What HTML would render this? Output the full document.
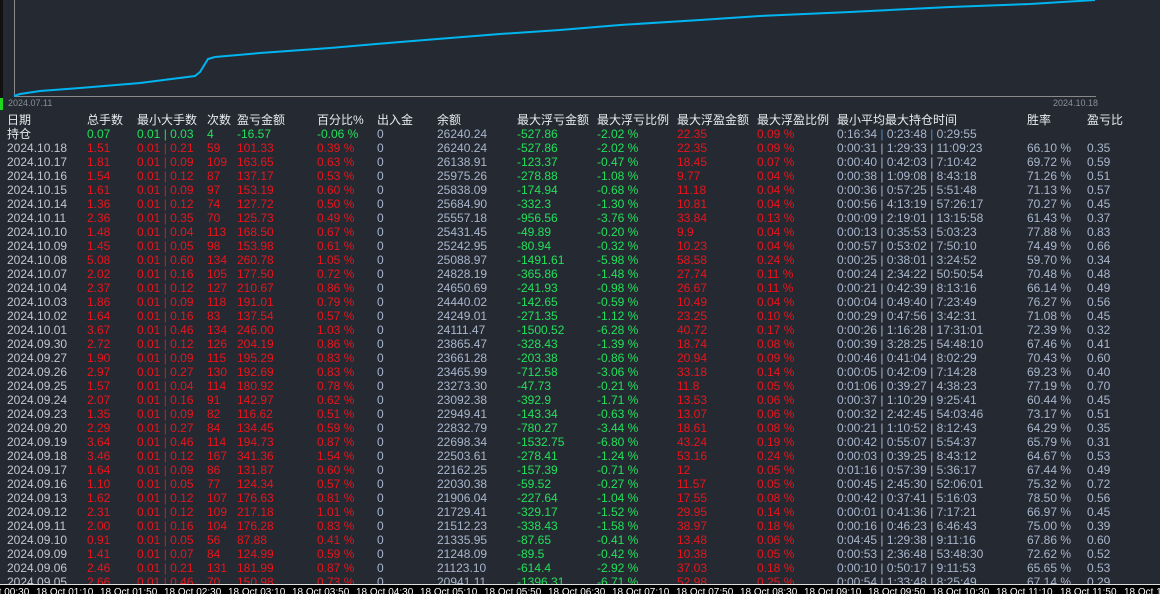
<!DOCTYPE html>
<html><head><meta charset="utf-8"><style>
*{margin:0;padding:0;box-sizing:border-box}
body{width:1160px;height:594px;background:#252a32;overflow:hidden;position:relative;font-family:"Liberation Sans","Noto Sans CJK SC",sans-serif;font-size:12px}
.row{position:absolute;left:0;height:14px;line-height:14px;white-space:nowrap;width:1160px}
.row span{position:absolute;top:0}
.h span{color:#e8eaee}
.d{color:#c2c6ce}.r{color:#e8141c}.g{color:#22e05a}.b{color:#a9b6cc}
.sep{color:#4a8ad8}
#bar{position:absolute;left:0;top:584px;width:1160px;height:10px;background:#000;border-top:1px solid #ddd;overflow:hidden}
#bar span{position:absolute;top:3px;color:#fff;font-size:10px;line-height:10px;white-space:nowrap}
</style></head><body>
<svg width="1160" height="110" style="position:absolute;left:0;top:0">
<rect x="0" y="0" width="3" height="594" fill="#111"/>
<rect x="0" y="98" width="3" height="12" fill="#1ed81e"/>
<line x1="14.5" y1="0" x2="14.5" y2="97" stroke="#8a8a8a" stroke-width="1"/>
<line x1="14" y1="96.5" x2="1096" y2="96.5" stroke="#8a8a8a" stroke-width="1"/>
<polyline fill="none" stroke="#00b4f0" stroke-width="2" points="14,96 20,94 40,91 80,88 140,83 195,76 200,72 208,59 215,57 260,53 330,48 400,42 500,34 560,30 620,25 700,20 760,16 850,12 950,7 1030,4 1095,0"/>
<text x="8" y="106" fill="#8a9098" font-size="9" font-family="Liberation Sans">2024.07.11</text>
<text x="1053" y="106" fill="#8a9098" font-size="9" font-family="Liberation Sans">2024.10.18</text>
</svg>
<div class="row h" style="top:113px"><span style="left:7px">日期</span><span style="left:87px">总手数</span><span style="left:137px">最小大手数</span><span style="left:207px">次数</span><span style="left:237px">盈亏金额</span><span style="left:317px">百分比%</span><span style="left:377px">出入金</span><span style="left:437px">余额</span><span style="left:517px">最大浮亏金额</span><span style="left:597px">最大浮亏比例</span><span style="left:677px">最大浮盈金额</span><span style="left:757px">最大浮盈比例</span><span style="left:837px">最小平均最大持仓时间</span><span style="left:1027px">胜率</span><span style="left:1087px">盈亏比</span></div>
<div class="row" style="top:127px"><span class="h" style="left:7px;color:#e8eaee">持仓</span><span class="g" style="left:87px">0.07</span><span class="g" style="left:137px">0.01 | 0.03</span><span class="g" style="left:207px">4</span><span class="g" style="left:237px">-16.57</span><span class="g" style="left:317px">-0.06 %</span><span class="b" style="left:377px">0</span><span class="b" style="left:437px">26240.24</span><span class="g" style="left:517px">-527.86</span><span class="g" style="left:597px">-2.02 %</span><span class="r" style="left:677px">22.35</span><span class="r" style="left:757px">0.09 %</span><span class="b" style="left:837px">0:16:34 <i class="sep" style="font-style:normal">|</i> 0:23:48 <i class="sep" style="font-style:normal">|</i> 0:29:55</span></div>
<div id="rows">
<div class="row" style="top:141px"><span class="d" style="left:7px">2024.10.18</span><span class="r" style="left:87px">1.51</span><span class="r" style="left:137px">0.01 | 0.21</span><span class="r" style="left:207px">59</span><span class="r" style="left:237px">101.33</span><span class="r" style="left:317px">0.39 %</span><span class="b" style="left:377px">0</span><span class="b" style="left:437px">26240.24</span><span class="g" style="left:517px">-527.86</span><span class="g" style="left:597px">-2.02 %</span><span class="r" style="left:677px">22.35</span><span class="r" style="left:757px">0.09 %</span><span class="b" style="left:837px">0:00:31 | 1:29:33 | 11:09:23</span><span class="b" style="left:1027px">66.10 %</span><span class="b" style="left:1087px">0.35</span></div>
<div class="row" style="top:155px"><span class="d" style="left:7px">2024.10.17</span><span class="r" style="left:87px">1.81</span><span class="r" style="left:137px">0.01 | 0.09</span><span class="r" style="left:207px">109</span><span class="r" style="left:237px">163.65</span><span class="r" style="left:317px">0.63 %</span><span class="b" style="left:377px">0</span><span class="b" style="left:437px">26138.91</span><span class="g" style="left:517px">-123.37</span><span class="g" style="left:597px">-0.47 %</span><span class="r" style="left:677px">18.45</span><span class="r" style="left:757px">0.07 %</span><span class="b" style="left:837px">0:00:40 | 0:42:03 | 7:10:42</span><span class="b" style="left:1027px">69.72 %</span><span class="b" style="left:1087px">0.59</span></div>
<div class="row" style="top:169px"><span class="d" style="left:7px">2024.10.16</span><span class="r" style="left:87px">1.54</span><span class="r" style="left:137px">0.01 | 0.12</span><span class="r" style="left:207px">87</span><span class="r" style="left:237px">137.17</span><span class="r" style="left:317px">0.53 %</span><span class="b" style="left:377px">0</span><span class="b" style="left:437px">25975.26</span><span class="g" style="left:517px">-278.88</span><span class="g" style="left:597px">-1.08 %</span><span class="r" style="left:677px">9.77</span><span class="r" style="left:757px">0.04 %</span><span class="b" style="left:837px">0:00:38 | 1:09:08 | 8:43:18</span><span class="b" style="left:1027px">71.26 %</span><span class="b" style="left:1087px">0.51</span></div>
<div class="row" style="top:183px"><span class="d" style="left:7px">2024.10.15</span><span class="r" style="left:87px">1.61</span><span class="r" style="left:137px">0.01 | 0.09</span><span class="r" style="left:207px">97</span><span class="r" style="left:237px">153.19</span><span class="r" style="left:317px">0.60 %</span><span class="b" style="left:377px">0</span><span class="b" style="left:437px">25838.09</span><span class="g" style="left:517px">-174.94</span><span class="g" style="left:597px">-0.68 %</span><span class="r" style="left:677px">11.18</span><span class="r" style="left:757px">0.04 %</span><span class="b" style="left:837px">0:00:36 | 0:57:25 | 5:51:48</span><span class="b" style="left:1027px">71.13 %</span><span class="b" style="left:1087px">0.57</span></div>
<div class="row" style="top:197px"><span class="d" style="left:7px">2024.10.14</span><span class="r" style="left:87px">1.36</span><span class="r" style="left:137px">0.01 | 0.12</span><span class="r" style="left:207px">74</span><span class="r" style="left:237px">127.72</span><span class="r" style="left:317px">0.50 %</span><span class="b" style="left:377px">0</span><span class="b" style="left:437px">25684.90</span><span class="g" style="left:517px">-332.3</span><span class="g" style="left:597px">-1.30 %</span><span class="r" style="left:677px">10.81</span><span class="r" style="left:757px">0.04 %</span><span class="b" style="left:837px">0:00:56 | 4:13:19 | 57:26:17</span><span class="b" style="left:1027px">70.27 %</span><span class="b" style="left:1087px">0.45</span></div>
<div class="row" style="top:211px"><span class="d" style="left:7px">2024.10.11</span><span class="r" style="left:87px">2.36</span><span class="r" style="left:137px">0.01 | 0.35</span><span class="r" style="left:207px">70</span><span class="r" style="left:237px">125.73</span><span class="r" style="left:317px">0.49 %</span><span class="b" style="left:377px">0</span><span class="b" style="left:437px">25557.18</span><span class="g" style="left:517px">-956.56</span><span class="g" style="left:597px">-3.76 %</span><span class="r" style="left:677px">33.84</span><span class="r" style="left:757px">0.13 %</span><span class="b" style="left:837px">0:00:09 | 2:19:01 | 13:15:58</span><span class="b" style="left:1027px">61.43 %</span><span class="b" style="left:1087px">0.37</span></div>
<div class="row" style="top:225px"><span class="d" style="left:7px">2024.10.10</span><span class="r" style="left:87px">1.48</span><span class="r" style="left:137px">0.01 | 0.04</span><span class="r" style="left:207px">113</span><span class="r" style="left:237px">168.50</span><span class="r" style="left:317px">0.67 %</span><span class="b" style="left:377px">0</span><span class="b" style="left:437px">25431.45</span><span class="g" style="left:517px">-49.89</span><span class="g" style="left:597px">-0.20 %</span><span class="r" style="left:677px">9.9</span><span class="r" style="left:757px">0.04 %</span><span class="b" style="left:837px">0:00:13 | 0:35:53 | 5:03:23</span><span class="b" style="left:1027px">77.88 %</span><span class="b" style="left:1087px">0.83</span></div>
<div class="row" style="top:239px"><span class="d" style="left:7px">2024.10.09</span><span class="r" style="left:87px">1.45</span><span class="r" style="left:137px">0.01 | 0.05</span><span class="r" style="left:207px">98</span><span class="r" style="left:237px">153.98</span><span class="r" style="left:317px">0.61 %</span><span class="b" style="left:377px">0</span><span class="b" style="left:437px">25242.95</span><span class="g" style="left:517px">-80.94</span><span class="g" style="left:597px">-0.32 %</span><span class="r" style="left:677px">10.23</span><span class="r" style="left:757px">0.04 %</span><span class="b" style="left:837px">0:00:57 | 0:53:02 | 7:50:10</span><span class="b" style="left:1027px">74.49 %</span><span class="b" style="left:1087px">0.66</span></div>
<div class="row" style="top:253px"><span class="d" style="left:7px">2024.10.08</span><span class="r" style="left:87px">5.08</span><span class="r" style="left:137px">0.01 | 0.60</span><span class="r" style="left:207px">134</span><span class="r" style="left:237px">260.78</span><span class="r" style="left:317px">1.05 %</span><span class="b" style="left:377px">0</span><span class="b" style="left:437px">25088.97</span><span class="g" style="left:517px">-1491.61</span><span class="g" style="left:597px">-5.98 %</span><span class="r" style="left:677px">58.58</span><span class="r" style="left:757px">0.24 %</span><span class="b" style="left:837px">0:00:25 | 0:38:01 | 3:24:52</span><span class="b" style="left:1027px">59.70 %</span><span class="b" style="left:1087px">0.34</span></div>
<div class="row" style="top:267px"><span class="d" style="left:7px">2024.10.07</span><span class="r" style="left:87px">2.02</span><span class="r" style="left:137px">0.01 | 0.16</span><span class="r" style="left:207px">105</span><span class="r" style="left:237px">177.50</span><span class="r" style="left:317px">0.72 %</span><span class="b" style="left:377px">0</span><span class="b" style="left:437px">24828.19</span><span class="g" style="left:517px">-365.86</span><span class="g" style="left:597px">-1.48 %</span><span class="r" style="left:677px">27.74</span><span class="r" style="left:757px">0.11 %</span><span class="b" style="left:837px">0:00:24 | 2:34:22 | 50:50:54</span><span class="b" style="left:1027px">70.48 %</span><span class="b" style="left:1087px">0.48</span></div>
<div class="row" style="top:281px"><span class="d" style="left:7px">2024.10.04</span><span class="r" style="left:87px">2.37</span><span class="r" style="left:137px">0.01 | 0.12</span><span class="r" style="left:207px">127</span><span class="r" style="left:237px">210.67</span><span class="r" style="left:317px">0.86 %</span><span class="b" style="left:377px">0</span><span class="b" style="left:437px">24650.69</span><span class="g" style="left:517px">-241.93</span><span class="g" style="left:597px">-0.98 %</span><span class="r" style="left:677px">26.67</span><span class="r" style="left:757px">0.11 %</span><span class="b" style="left:837px">0:00:21 | 0:42:39 | 8:13:16</span><span class="b" style="left:1027px">66.14 %</span><span class="b" style="left:1087px">0.49</span></div>
<div class="row" style="top:295px"><span class="d" style="left:7px">2024.10.03</span><span class="r" style="left:87px">1.86</span><span class="r" style="left:137px">0.01 | 0.09</span><span class="r" style="left:207px">118</span><span class="r" style="left:237px">191.01</span><span class="r" style="left:317px">0.79 %</span><span class="b" style="left:377px">0</span><span class="b" style="left:437px">24440.02</span><span class="g" style="left:517px">-142.65</span><span class="g" style="left:597px">-0.59 %</span><span class="r" style="left:677px">10.49</span><span class="r" style="left:757px">0.04 %</span><span class="b" style="left:837px">0:00:04 | 0:49:40 | 7:23:49</span><span class="b" style="left:1027px">76.27 %</span><span class="b" style="left:1087px">0.56</span></div>
<div class="row" style="top:309px"><span class="d" style="left:7px">2024.10.02</span><span class="r" style="left:87px">1.64</span><span class="r" style="left:137px">0.01 | 0.16</span><span class="r" style="left:207px">83</span><span class="r" style="left:237px">137.54</span><span class="r" style="left:317px">0.57 %</span><span class="b" style="left:377px">0</span><span class="b" style="left:437px">24249.01</span><span class="g" style="left:517px">-271.35</span><span class="g" style="left:597px">-1.12 %</span><span class="r" style="left:677px">23.25</span><span class="r" style="left:757px">0.10 %</span><span class="b" style="left:837px">0:00:29 | 0:47:56 | 3:42:31</span><span class="b" style="left:1027px">71.08 %</span><span class="b" style="left:1087px">0.45</span></div>
<div class="row" style="top:323px"><span class="d" style="left:7px">2024.10.01</span><span class="r" style="left:87px">3.67</span><span class="r" style="left:137px">0.01 | 0.46</span><span class="r" style="left:207px">134</span><span class="r" style="left:237px">246.00</span><span class="r" style="left:317px">1.03 %</span><span class="b" style="left:377px">0</span><span class="b" style="left:437px">24111.47</span><span class="g" style="left:517px">-1500.52</span><span class="g" style="left:597px">-6.28 %</span><span class="r" style="left:677px">40.72</span><span class="r" style="left:757px">0.17 %</span><span class="b" style="left:837px">0:00:26 | 1:16:28 | 17:31:01</span><span class="b" style="left:1027px">72.39 %</span><span class="b" style="left:1087px">0.32</span></div>
<div class="row" style="top:337px"><span class="d" style="left:7px">2024.09.30</span><span class="r" style="left:87px">2.72</span><span class="r" style="left:137px">0.01 | 0.12</span><span class="r" style="left:207px">126</span><span class="r" style="left:237px">204.19</span><span class="r" style="left:317px">0.86 %</span><span class="b" style="left:377px">0</span><span class="b" style="left:437px">23865.47</span><span class="g" style="left:517px">-328.43</span><span class="g" style="left:597px">-1.39 %</span><span class="r" style="left:677px">18.74</span><span class="r" style="left:757px">0.08 %</span><span class="b" style="left:837px">0:00:39 | 3:28:25 | 54:48:10</span><span class="b" style="left:1027px">67.46 %</span><span class="b" style="left:1087px">0.41</span></div>
<div class="row" style="top:351px"><span class="d" style="left:7px">2024.09.27</span><span class="r" style="left:87px">1.90</span><span class="r" style="left:137px">0.01 | 0.09</span><span class="r" style="left:207px">115</span><span class="r" style="left:237px">195.29</span><span class="r" style="left:317px">0.83 %</span><span class="b" style="left:377px">0</span><span class="b" style="left:437px">23661.28</span><span class="g" style="left:517px">-203.38</span><span class="g" style="left:597px">-0.86 %</span><span class="r" style="left:677px">20.94</span><span class="r" style="left:757px">0.09 %</span><span class="b" style="left:837px">0:00:46 | 0:41:04 | 8:02:29</span><span class="b" style="left:1027px">70.43 %</span><span class="b" style="left:1087px">0.60</span></div>
<div class="row" style="top:365px"><span class="d" style="left:7px">2024.09.26</span><span class="r" style="left:87px">2.97</span><span class="r" style="left:137px">0.01 | 0.27</span><span class="r" style="left:207px">130</span><span class="r" style="left:237px">192.69</span><span class="r" style="left:317px">0.83 %</span><span class="b" style="left:377px">0</span><span class="b" style="left:437px">23465.99</span><span class="g" style="left:517px">-712.58</span><span class="g" style="left:597px">-3.06 %</span><span class="r" style="left:677px">33.18</span><span class="r" style="left:757px">0.14 %</span><span class="b" style="left:837px">0:00:05 | 0:42:09 | 7:14:28</span><span class="b" style="left:1027px">69.23 %</span><span class="b" style="left:1087px">0.40</span></div>
<div class="row" style="top:379px"><span class="d" style="left:7px">2024.09.25</span><span class="r" style="left:87px">1.57</span><span class="r" style="left:137px">0.01 | 0.04</span><span class="r" style="left:207px">114</span><span class="r" style="left:237px">180.92</span><span class="r" style="left:317px">0.78 %</span><span class="b" style="left:377px">0</span><span class="b" style="left:437px">23273.30</span><span class="g" style="left:517px">-47.73</span><span class="g" style="left:597px">-0.21 %</span><span class="r" style="left:677px">11.8</span><span class="r" style="left:757px">0.05 %</span><span class="b" style="left:837px">0:01:06 | 0:39:27 | 4:38:23</span><span class="b" style="left:1027px">77.19 %</span><span class="b" style="left:1087px">0.70</span></div>
<div class="row" style="top:393px"><span class="d" style="left:7px">2024.09.24</span><span class="r" style="left:87px">2.07</span><span class="r" style="left:137px">0.01 | 0.16</span><span class="r" style="left:207px">91</span><span class="r" style="left:237px">142.97</span><span class="r" style="left:317px">0.62 %</span><span class="b" style="left:377px">0</span><span class="b" style="left:437px">23092.38</span><span class="g" style="left:517px">-392.9</span><span class="g" style="left:597px">-1.71 %</span><span class="r" style="left:677px">13.53</span><span class="r" style="left:757px">0.06 %</span><span class="b" style="left:837px">0:00:37 | 1:10:29 | 9:25:41</span><span class="b" style="left:1027px">60.44 %</span><span class="b" style="left:1087px">0.45</span></div>
<div class="row" style="top:407px"><span class="d" style="left:7px">2024.09.23</span><span class="r" style="left:87px">1.35</span><span class="r" style="left:137px">0.01 | 0.09</span><span class="r" style="left:207px">82</span><span class="r" style="left:237px">116.62</span><span class="r" style="left:317px">0.51 %</span><span class="b" style="left:377px">0</span><span class="b" style="left:437px">22949.41</span><span class="g" style="left:517px">-143.34</span><span class="g" style="left:597px">-0.63 %</span><span class="r" style="left:677px">13.07</span><span class="r" style="left:757px">0.06 %</span><span class="b" style="left:837px">0:00:32 | 2:42:45 | 54:03:46</span><span class="b" style="left:1027px">73.17 %</span><span class="b" style="left:1087px">0.51</span></div>
<div class="row" style="top:421px"><span class="d" style="left:7px">2024.09.20</span><span class="r" style="left:87px">2.29</span><span class="r" style="left:137px">0.01 | 0.27</span><span class="r" style="left:207px">84</span><span class="r" style="left:237px">134.45</span><span class="r" style="left:317px">0.59 %</span><span class="b" style="left:377px">0</span><span class="b" style="left:437px">22832.79</span><span class="g" style="left:517px">-780.27</span><span class="g" style="left:597px">-3.44 %</span><span class="r" style="left:677px">18.61</span><span class="r" style="left:757px">0.08 %</span><span class="b" style="left:837px">0:00:21 | 1:10:52 | 8:12:43</span><span class="b" style="left:1027px">64.29 %</span><span class="b" style="left:1087px">0.35</span></div>
<div class="row" style="top:435px"><span class="d" style="left:7px">2024.09.19</span><span class="r" style="left:87px">3.64</span><span class="r" style="left:137px">0.01 | 0.46</span><span class="r" style="left:207px">114</span><span class="r" style="left:237px">194.73</span><span class="r" style="left:317px">0.87 %</span><span class="b" style="left:377px">0</span><span class="b" style="left:437px">22698.34</span><span class="g" style="left:517px">-1532.75</span><span class="g" style="left:597px">-6.80 %</span><span class="r" style="left:677px">43.24</span><span class="r" style="left:757px">0.19 %</span><span class="b" style="left:837px">0:00:42 | 0:55:07 | 5:54:37</span><span class="b" style="left:1027px">65.79 %</span><span class="b" style="left:1087px">0.31</span></div>
<div class="row" style="top:449px"><span class="d" style="left:7px">2024.09.18</span><span class="r" style="left:87px">3.46</span><span class="r" style="left:137px">0.01 | 0.12</span><span class="r" style="left:207px">167</span><span class="r" style="left:237px">341.36</span><span class="r" style="left:317px">1.54 %</span><span class="b" style="left:377px">0</span><span class="b" style="left:437px">22503.61</span><span class="g" style="left:517px">-278.41</span><span class="g" style="left:597px">-1.24 %</span><span class="r" style="left:677px">53.16</span><span class="r" style="left:757px">0.24 %</span><span class="b" style="left:837px">0:00:03 | 0:39:25 | 8:43:12</span><span class="b" style="left:1027px">64.67 %</span><span class="b" style="left:1087px">0.53</span></div>
<div class="row" style="top:463px"><span class="d" style="left:7px">2024.09.17</span><span class="r" style="left:87px">1.64</span><span class="r" style="left:137px">0.01 | 0.09</span><span class="r" style="left:207px">86</span><span class="r" style="left:237px">131.87</span><span class="r" style="left:317px">0.60 %</span><span class="b" style="left:377px">0</span><span class="b" style="left:437px">22162.25</span><span class="g" style="left:517px">-157.39</span><span class="g" style="left:597px">-0.71 %</span><span class="r" style="left:677px">12</span><span class="r" style="left:757px">0.05 %</span><span class="b" style="left:837px">0:01:16 | 0:57:39 | 5:36:17</span><span class="b" style="left:1027px">67.44 %</span><span class="b" style="left:1087px">0.49</span></div>
<div class="row" style="top:477px"><span class="d" style="left:7px">2024.09.16</span><span class="r" style="left:87px">1.10</span><span class="r" style="left:137px">0.01 | 0.05</span><span class="r" style="left:207px">77</span><span class="r" style="left:237px">124.34</span><span class="r" style="left:317px">0.57 %</span><span class="b" style="left:377px">0</span><span class="b" style="left:437px">22030.38</span><span class="g" style="left:517px">-59.52</span><span class="g" style="left:597px">-0.27 %</span><span class="r" style="left:677px">11.57</span><span class="r" style="left:757px">0.05 %</span><span class="b" style="left:837px">0:00:45 | 2:45:30 | 52:06:01</span><span class="b" style="left:1027px">75.32 %</span><span class="b" style="left:1087px">0.72</span></div>
<div class="row" style="top:491px"><span class="d" style="left:7px">2024.09.13</span><span class="r" style="left:87px">1.62</span><span class="r" style="left:137px">0.01 | 0.12</span><span class="r" style="left:207px">107</span><span class="r" style="left:237px">176.63</span><span class="r" style="left:317px">0.81 %</span><span class="b" style="left:377px">0</span><span class="b" style="left:437px">21906.04</span><span class="g" style="left:517px">-227.64</span><span class="g" style="left:597px">-1.04 %</span><span class="r" style="left:677px">17.55</span><span class="r" style="left:757px">0.08 %</span><span class="b" style="left:837px">0:00:42 | 0:37:41 | 5:16:03</span><span class="b" style="left:1027px">78.50 %</span><span class="b" style="left:1087px">0.56</span></div>
<div class="row" style="top:505px"><span class="d" style="left:7px">2024.09.12</span><span class="r" style="left:87px">2.31</span><span class="r" style="left:137px">0.01 | 0.12</span><span class="r" style="left:207px">109</span><span class="r" style="left:237px">217.18</span><span class="r" style="left:317px">1.01 %</span><span class="b" style="left:377px">0</span><span class="b" style="left:437px">21729.41</span><span class="g" style="left:517px">-329.17</span><span class="g" style="left:597px">-1.52 %</span><span class="r" style="left:677px">29.95</span><span class="r" style="left:757px">0.14 %</span><span class="b" style="left:837px">0:00:01 | 0:41:36 | 7:17:21</span><span class="b" style="left:1027px">66.97 %</span><span class="b" style="left:1087px">0.45</span></div>
<div class="row" style="top:519px"><span class="d" style="left:7px">2024.09.11</span><span class="r" style="left:87px">2.00</span><span class="r" style="left:137px">0.01 | 0.16</span><span class="r" style="left:207px">104</span><span class="r" style="left:237px">176.28</span><span class="r" style="left:317px">0.83 %</span><span class="b" style="left:377px">0</span><span class="b" style="left:437px">21512.23</span><span class="g" style="left:517px">-338.43</span><span class="g" style="left:597px">-1.58 %</span><span class="r" style="left:677px">38.97</span><span class="r" style="left:757px">0.18 %</span><span class="b" style="left:837px">0:00:16 | 0:46:23 | 6:46:43</span><span class="b" style="left:1027px">75.00 %</span><span class="b" style="left:1087px">0.39</span></div>
<div class="row" style="top:533px"><span class="d" style="left:7px">2024.09.10</span><span class="r" style="left:87px">0.91</span><span class="r" style="left:137px">0.01 | 0.05</span><span class="r" style="left:207px">56</span><span class="r" style="left:237px">87.88</span><span class="r" style="left:317px">0.41 %</span><span class="b" style="left:377px">0</span><span class="b" style="left:437px">21335.95</span><span class="g" style="left:517px">-87.65</span><span class="g" style="left:597px">-0.41 %</span><span class="r" style="left:677px">13.48</span><span class="r" style="left:757px">0.06 %</span><span class="b" style="left:837px">0:04:45 | 1:29:38 | 9:11:16</span><span class="b" style="left:1027px">67.86 %</span><span class="b" style="left:1087px">0.60</span></div>
<div class="row" style="top:547px"><span class="d" style="left:7px">2024.09.09</span><span class="r" style="left:87px">1.41</span><span class="r" style="left:137px">0.01 | 0.07</span><span class="r" style="left:207px">84</span><span class="r" style="left:237px">124.99</span><span class="r" style="left:317px">0.59 %</span><span class="b" style="left:377px">0</span><span class="b" style="left:437px">21248.09</span><span class="g" style="left:517px">-89.5</span><span class="g" style="left:597px">-0.42 %</span><span class="r" style="left:677px">10.38</span><span class="r" style="left:757px">0.05 %</span><span class="b" style="left:837px">0:00:53 | 2:36:48 | 53:48:30</span><span class="b" style="left:1027px">72.62 %</span><span class="b" style="left:1087px">0.52</span></div>
<div class="row" style="top:561px"><span class="d" style="left:7px">2024.09.06</span><span class="r" style="left:87px">2.46</span><span class="r" style="left:137px">0.01 | 0.21</span><span class="r" style="left:207px">131</span><span class="r" style="left:237px">181.99</span><span class="r" style="left:317px">0.87 %</span><span class="b" style="left:377px">0</span><span class="b" style="left:437px">21123.10</span><span class="g" style="left:517px">-614.4</span><span class="g" style="left:597px">-2.92 %</span><span class="r" style="left:677px">37.03</span><span class="r" style="left:757px">0.18 %</span><span class="b" style="left:837px">0:00:10 | 0:50:17 | 9:11:53</span><span class="b" style="left:1027px">65.65 %</span><span class="b" style="left:1087px">0.53</span></div>
<div class="row" style="top:575px"><span class="d" style="left:7px">2024.09.05</span><span class="r" style="left:87px">2.66</span><span class="r" style="left:137px">0.01 | 0.46</span><span class="r" style="left:207px">70</span><span class="r" style="left:237px">150.98</span><span class="r" style="left:317px">0.73 %</span><span class="b" style="left:377px">0</span><span class="b" style="left:437px">20941.11</span><span class="g" style="left:517px">-1396.31</span><span class="g" style="left:597px">-6.71 %</span><span class="r" style="left:677px">52.98</span><span class="r" style="left:757px">0.25 %</span><span class="b" style="left:837px">0:00:54 | 1:33:48 | 8:25:49</span><span class="b" style="left:1027px">67.14 %</span><span class="b" style="left:1087px">0.29</span></div>
</div>
<div id="bar">
<span style="left:-28px">18 Oct 00:30</span><span style="left:36px">18 Oct 01:10</span><span style="left:100px">18 Oct 01:50</span><span style="left:164px">18 Oct 02:30</span><span style="left:228px">18 Oct 03:10</span><span style="left:292px">18 Oct 03:50</span><span style="left:356px">18 Oct 04:30</span><span style="left:420px">18 Oct 05:10</span><span style="left:484px">18 Oct 05:50</span><span style="left:548px">18 Oct 06:30</span><span style="left:612px">18 Oct 07:10</span><span style="left:676px">18 Oct 07:50</span><span style="left:740px">18 Oct 08:30</span><span style="left:804px">18 Oct 09:10</span><span style="left:868px">18 Oct 09:50</span><span style="left:932px">18 Oct 10:30</span><span style="left:996px">18 Oct 11:10</span><span style="left:1060px">18 Oct 11:50</span><span style="left:1124px">18 Oct 12:30</span>
</div>
</body></html>
